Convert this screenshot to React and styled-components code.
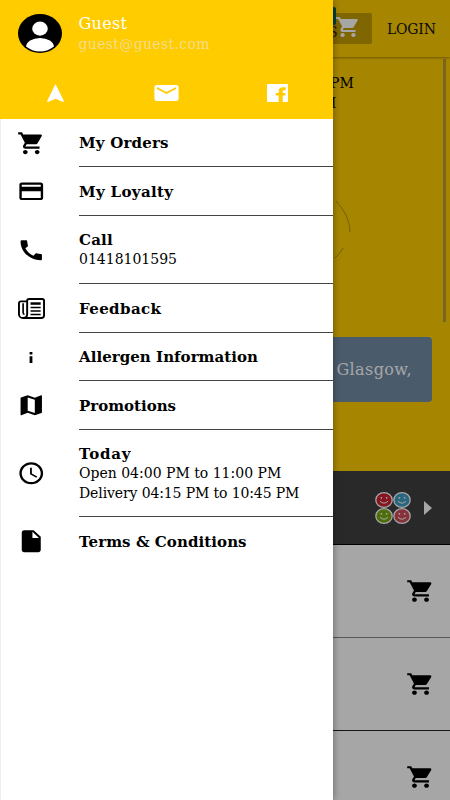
import React from "react";
import styled, { createGlobalStyle } from "styled-components";
import {
  MdShoppingCart,
  MdCreditCard,
  MdCall,
  MdMap,
  MdAccessTime,
  MdInsertDriveFile,
  MdEmail,
} from "react-icons/md";

const GlobalStyle = createGlobalStyle`
  * {
    box-sizing: border-box;
  }
  body {
    margin: 0;
    overflow: hidden;
    font-family: "DejaVu Serif", serif;
    color: #000;
  }
`;

const NewsIcon = (props) => (
  <svg viewBox="0 0 28 22" fill="none" stroke="currentColor" {...props}>
    <path
      d="M9.500 17V3a2 2 0 0 1 2-2h13.500a2 2 0 0 1 2 2v15a3 3 0 0 1-3 3H5a4 4 0 0 1-4-4V5.500a2 2 0 0 1 2-2h6.500M9.500 17a3.800 3.800 0 0 1-4 4"
      strokeWidth="2"
    />
    <path d="M5.300 5.500V15.500q0 1.500 1.500 1.500" strokeWidth="1.700" />
    <path d="M13 5.800h10.500" strokeWidth="2.600" />
    <path d="M13 10h10.500M13 13.600h10.500M13 17.200h10.500" strokeWidth="1.500" />
  </svg>
);

const InfoIcon = (props) => (
  <svg viewBox="0 0 4 12" fill="currentColor" {...props}>
    <path d="M.6 0h2.800v2.600H.6zM.6 4.600h2.800V12H.6z" />
  </svg>
);

const ArrowUpIcon = (props) => (
  <svg viewBox="0 0 17 18" fill="currentColor" {...props}>
    <path d="M8.500 0L17 17.200l-.8.800-7.700-3.200L.8 18l-.8-.8z" />
  </svg>
);

const FacebookIcon = (props) => (
  <svg viewBox="3 3 18 18" fill="currentColor" {...props}>
    <path d="M4 3h16a1 1 0 0 1 1 1v16a1 1 0 0 1-1 1h-3.500v-6.500h2.300V12h-2.300v-1.500c0-.8.2-1.200 1.200-1.200H19V6.300h-2.300c-2.500 0-3.700 1.500-3.700 3.700v2h-2.500v2.500H13V21H4a1 1 0 0 1-1-1V4a1 1 0 0 1 1-1z" />
  </svg>
);

const menu = [
  { title: "My Orders", spacing: 0.2, height: 48, icon: MdShoppingCart },
  { title: "My Loyalty", spacing: 0.35, height: 49, icon: MdCreditCard },
  {
    title: "Call",
    spacing: 0.2,
    height: 68,
    icon: MdCall,
    lines: [{ text: "01418101595", spacing: 0 }],
  },
  { title: "Feedback", spacing: 0.4, height: 49, icon: NewsIcon, size: [27, 21] },
  {
    title: "Allergen Information",
    spacing: 0.05,
    height: 48,
    icon: InfoIcon,
    size: [4, 11],
  },
  { title: "Promotions", spacing: 0, height: 49, icon: MdMap },
  {
    title: "Today",
    spacing: 0.8,
    height: 87,
    icon: MdAccessTime,
    lines: [
      { text: "Open 04:00 PM to 11:00 PM", spacing: 0 },
      { text: "Delivery 04:15 PM to 10:45 PM", spacing: -0.12 },
    ],
  },
  {
    title: "Terms & Conditions",
    spacing: 0.08,
    height: 49,
    icon: MdInsertDriveFile,
    last: true,
  },
];

const products = [
  { id: 1, line: "#888" },
  { id: 2, line: "#222" },
  { id: 3, line: "#222" },
];

const smileys = ["#cf2236", "#3f9fc6", "#77aa12", "#cf4d58"];

const Smiley = ({ color }) => (
  <svg width="18" height="16" viewBox="0 0 18 16">
    <ellipse cx="9" cy="8" rx="8.200" ry="7.300" fill={color} stroke="#fff" strokeWidth="1.300" />
    <circle cx="6.300" cy="5.800" r=".9" fill="#fff" />
    <circle cx="11.700" cy="5.800" r=".9" fill="#fff" />
    <path d="M5 9.200q4 4 8 0" fill="none" stroke="#fff" strokeWidth="1" />
  </svg>
);

export default function App() {
  return (
    <Screen>
      <GlobalStyle />
      <Page>
        <AppBar>
          <Basket>
            <Logo />
            <BasketLabel>S</BasketLabel>
            <StretchIcon as={MdShoppingCart} $w={26} $h={24} />
          </Basket>
          <Login>LOGIN</Login>
        </AppBar>
        <Hero>
          <Hours>
            <span>PM</span>
            <span>M</span>
          </Hours>
          <Ring viewBox="0 0 20 64">
            <path d="M3 3Q17 18 17 34M10 50Q7 56 2 60" />
          </Ring>
          <Address>Glasgow,</Address>
          <ScrollThumb />
        </Hero>
        <Category>
          <Smileys>
            {smileys.map((color) => (
              <Smiley key={color} color={color} />
            ))}
          </Smileys>
          <Arrow viewBox="0 0 8 14">
            <path d="M0 0l8 7-8 7z" />
          </Arrow>
        </Category>
        {products.map(({ id, line }) => (
          <Product key={id} $line={line}>
            <StretchIcon as={MdShoppingCart} $w={29} $h={26} />
          </Product>
        ))}
      </Page>
      <Scrim />
      <Drawer>
        <Profile>
          <User>
            <Avatar viewBox="0 0 44 40" preserveAspectRatio="none">
              <clipPath id="face">
                <ellipse cx="22" cy="20" rx="20" ry="18.500" />
              </clipPath>
              <ellipse cx="22" cy="20" rx="22" ry="20" />
              <g fill="#fff" clipPath="url(#face)">
                <ellipse cx="22" cy="15" rx="7.800" ry="7.200" />
                <ellipse cx="22" cy="34" rx="14" ry="9.500" />
              </g>
            </Avatar>
            <div>
              <UserName>Guest</UserName>
              <UserMail>guest@guest.com</UserMail>
            </div>
          </User>
          <Links>
            <StretchIcon as={ArrowUpIcon} $w={17} $h={18} />
            <StretchIcon as={MdEmail} $w={29} $h={24} />
            <StretchIcon as={FacebookIcon} $w={21} $h={18} />
          </Links>
        </Profile>
        {menu.map(({ title, spacing, height, icon, size = [28.5, 26.5], lines = [], last }) => (
          <Row key={title} $height={height}>
            <IconCell>
              <StretchIcon as={icon} $w={size[0]} $h={size[1]} />
            </IconCell>
            <RowBody $last={last}>
              <Title $spacing={spacing}>{title}</Title>
              {lines.map((line) => (
                <Detail key={line.text} $spacing={line.spacing}>
                  {line.text}
                </Detail>
              ))}
            </RowBody>
          </Row>
        ))}
      </Drawer>
    </Screen>
  );
}

const Screen = styled.div`
  position: relative;
  width: 450px;
  height: 800px;
  overflow: hidden;
  background-color: #fff;
`;

const Page = styled.div`
  display: flex;
  flex-direction: column;
  height: 100%;
`;

const StretchIcon = styled.svg.attrs({ preserveAspectRatio: "none" })`
  display: block;
  flex: none;
  width: ${({ $w }) => $w}px;
  height: ${({ $h }) => $h}px;
`;

const AppBar = styled.header`
  display: flex;
  flex: none;
  align-items: center;
  justify-content: flex-end;
  gap: 15px;
  height: 57px;
  padding-right: 14px;
  background-color: #ffcc00;
  box-shadow: 0 1px 2px rgba(0, 0, 0, 0.35);
  z-index: 1;
`;

const Basket = styled.div`
  position: relative;
  display: flex;
  justify-content: flex-end;
  width: 60px;
  height: 31px;
  padding: 2px 11px 0 0;
  border-radius: 2px;
  background-color: #c59d00;
  color: #fff;
`;

const Logo = styled.span`
  position: absolute;
  top: -6px;
  left: 0;
  width: 24px;
  height: 18px;
  border-radius: 2px;
  background-color: #006064;
`;

const BasketLabel = styled.span`
  position: absolute;
  top: 11px;
  left: 16px;
  font-size: 14px;
  color: #222;
`;

const Login = styled.span`
  width: 49px;
  font-size: 14px;
  letter-spacing: -0.2px;
  color: #111;
`;

const Hero = styled.section`
  position: relative;
  display: flex;
  flex: none;
  flex-direction: column;
  align-items: flex-end;
  height: 414px;
  padding: 17px 18px 0 0;
  background-color: #ffcc00;
`;

const Hours = styled.div`
  display: flex;
  flex-direction: column;
  width: 102px;
  font-size: 14px;
  line-height: 19.5px;

  span:last-child {
    margin-left: -8px;
  }
`;

const Ring = styled.svg`
  flex: none;
  width: 20px;
  height: 64px;
  margin: 85px 79px 0 0;
  fill: none;
  stroke: #8a6e00;
  stroke-width: 0.6;
`;

const Address = styled.div`
  flex: none;
  width: 380px;
  height: 65px;
  margin-top: 75px;
  padding-right: 20px;
  border-radius: 4px;
  background-color: #728ca6;
  color: #fff;
  font-size: 16px;
  letter-spacing: 0.4px;
  line-height: 65px;
  text-align: right;
`;

const ScrollThumb = styled.div`
  position: absolute;
  top: 2px;
  right: 4px;
  width: 3px;
  height: 263px;
  background-color: #b99b30;
`;

const Category = styled.section`
  display: flex;
  flex: none;
  align-items: center;
  justify-content: flex-end;
  gap: 13px;
  height: 74px;
  padding-right: 18px;
  border-bottom: 1px solid #000;
  background-color: #3f3f3f;
`;

const Smileys = styled.div`
  display: grid;
  grid-template-columns: 18px 18px;
  grid-auto-rows: 16px;
`;

const Arrow = styled.svg`
  width: 8px;
  height: 14px;
  fill: #fff;
`;

const Product = styled.div`
  display: flex;
  flex: none;
  align-items: center;
  justify-content: flex-end;
  height: 93px;
  padding-right: 15px;
  border-bottom: 1px solid ${({ $line }) => $line};
`;

const Scrim = styled.div`
  position: absolute;
  inset: 0;
  z-index: 2;
  background-color: rgba(0, 0, 0, 0.35);
`;

const Drawer = styled.aside`
  position: absolute;
  top: 0;
  left: 0;
  z-index: 3;
  width: 333px;
  height: 800px;
  border-left: 1px solid #eee;
  background-color: #fff;
  box-shadow: 0 0 7px rgba(0, 0, 0, 0.4);
`;

const Profile = styled.div`
  height: 119px;
  margin-left: -1px;
  padding-top: 14px;
  background-color: #ffcc00;
`;

const User = styled.div`
  display: flex;
  gap: 17px;
  height: 56px;
  padding-left: 17.5px;
`;

const Avatar = styled.svg`
  width: 44px;
  height: 39px;
`;

const UserName = styled.div`
  font-size: 16px;
  line-height: 20px;
  letter-spacing: 0.3px;
  color: #fff;
`;

const UserMail = styled.div`
  font-size: 14px;
  line-height: 20px;
  letter-spacing: 0.35px;
  color: #f4dc8a;
`;

const Links = styled.div`
  display: grid;
  grid-template-columns: repeat(3, 111px);
  align-items: center;
  justify-items: center;
  height: 46px;
  color: #fff;
`;

const Row = styled.div`
  display: flex;
  height: ${({ $height }) => $height}px;
  margin-left: -1px;
`;

const IconCell = styled.div`
  display: flex;
  flex: none;
  align-items: center;
  justify-content: center;
  width: 62px;
`;

const RowBody = styled.div`
  display: flex;
  flex: 1;
  flex-direction: column;
  justify-content: center;
  min-width: 0;
  margin-left: 17px;
  padding-top: 1px;
  border-bottom: 1px solid ${({ $last }) => ($last ? "transparent" : "#444")};
  white-space: nowrap;
`;

const Title = styled.div`
  font-size: 15px;
  font-weight: 700;
  line-height: 20px;
  letter-spacing: ${({ $spacing }) => $spacing}px;
`;

const Detail = styled.div`
  font-size: 14px;
  line-height: 19.5px;
  letter-spacing: ${({ $spacing }) => $spacing}px;
`;
